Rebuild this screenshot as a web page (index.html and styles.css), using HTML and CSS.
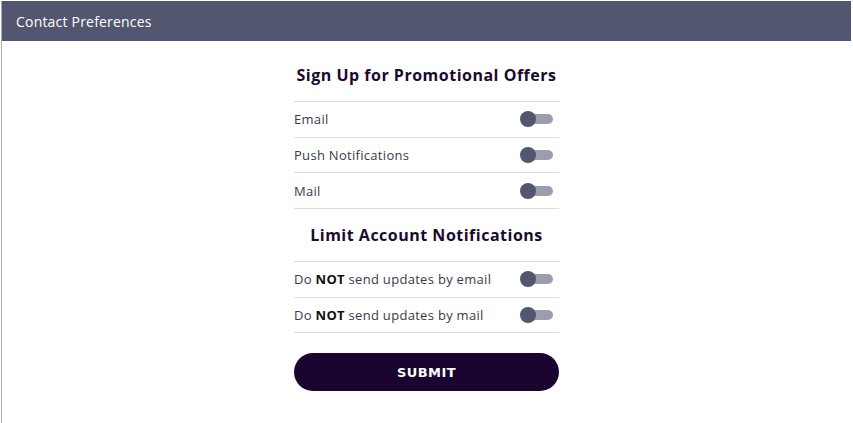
FILE: index.html
```html
<!DOCTYPE html>
<html>
<head>
    <title>Contact Preferences</title>
    <link rel="stylesheet" href="styles.css">
</head>
<body>
    <div class="panel">
        <div class="panel-header">Contact Preferences</div>
        <div class="panel-body">
            <div class="prefs">
                <h2>Sign Up for Promotional Offers</h2>
                <div class="pref-list">
                    <label class="pref-row"><span>Email</span><span class="toggle"></span></label>
                    <label class="pref-row"><span>Push Notifications</span><span class="toggle"></span></label>
                    <label class="pref-row"><span>Mail</span><span class="toggle"></span></label>
                </div>

                <h2>Limit Account Notifications</h2>
                <div class="pref-list">
                    <label class="pref-row"><span>Do <strong>NOT</strong> send updates by email</span><span class="toggle"></span></label>
                    <label class="pref-row"><span>Do <strong>NOT</strong> send updates by mail</span><span class="toggle"></span></label>
                </div>

                <button class="btn-submit">SUBMIT</button>
            </div>
        </div>
    </div>
</body>
</html>
```

FILE: styles.css
```css
* { margin: 0; padding: 0; box-sizing: border-box; }
body { font-family: 'Open Sans', 'Noto Sans', Arial, sans-serif; background: white; padding: 1px 2px 0 1px; }
.panel { border-left: 1px solid #a9a9b3; min-height: 422px; }
.panel-header { background: #525670; color: white; height: 40px; padding: 0 14px; display: flex; align-items: center; font-size: 14px; letter-spacing: 0.2px; }
.panel-body { padding-top: 23px; }
.prefs { width: 265px; margin: 0 auto; }
h2 { font-size: 16px; font-weight: 700; color: #1a0a2e; text-align: center; margin-bottom: 15px; letter-spacing: 0.5px; }
.pref-list { border-top: 1px solid #ddd; margin-bottom: 15px; }
.pref-row { display: flex; justify-content: space-between; align-items: center; height: 35.7px; border-bottom: 1px solid #ddd; font-size: 13px; letter-spacing: 0.3px; color: #3a3a4a; padding-right: 6px; }
.pref-row strong { color: #111; }
.toggle { position: relative; width: 32px; height: 10px; border-radius: 5px; background: #9c9eae; }
.toggle::before { content: ''; position: absolute; left: -1px; top: -3px; width: 16px; height: 16px; border-radius: 50%; background: #525670; }
.btn-submit { display: block; width: 100%; height: 38px; margin-top: 20px; border: none; border-radius: 19px; background: #1a0530; color: white; font-family: 'DejaVu Sans', Arial, sans-serif; font-weight: 700; font-size: 13px; letter-spacing: 0.4px; }
```
